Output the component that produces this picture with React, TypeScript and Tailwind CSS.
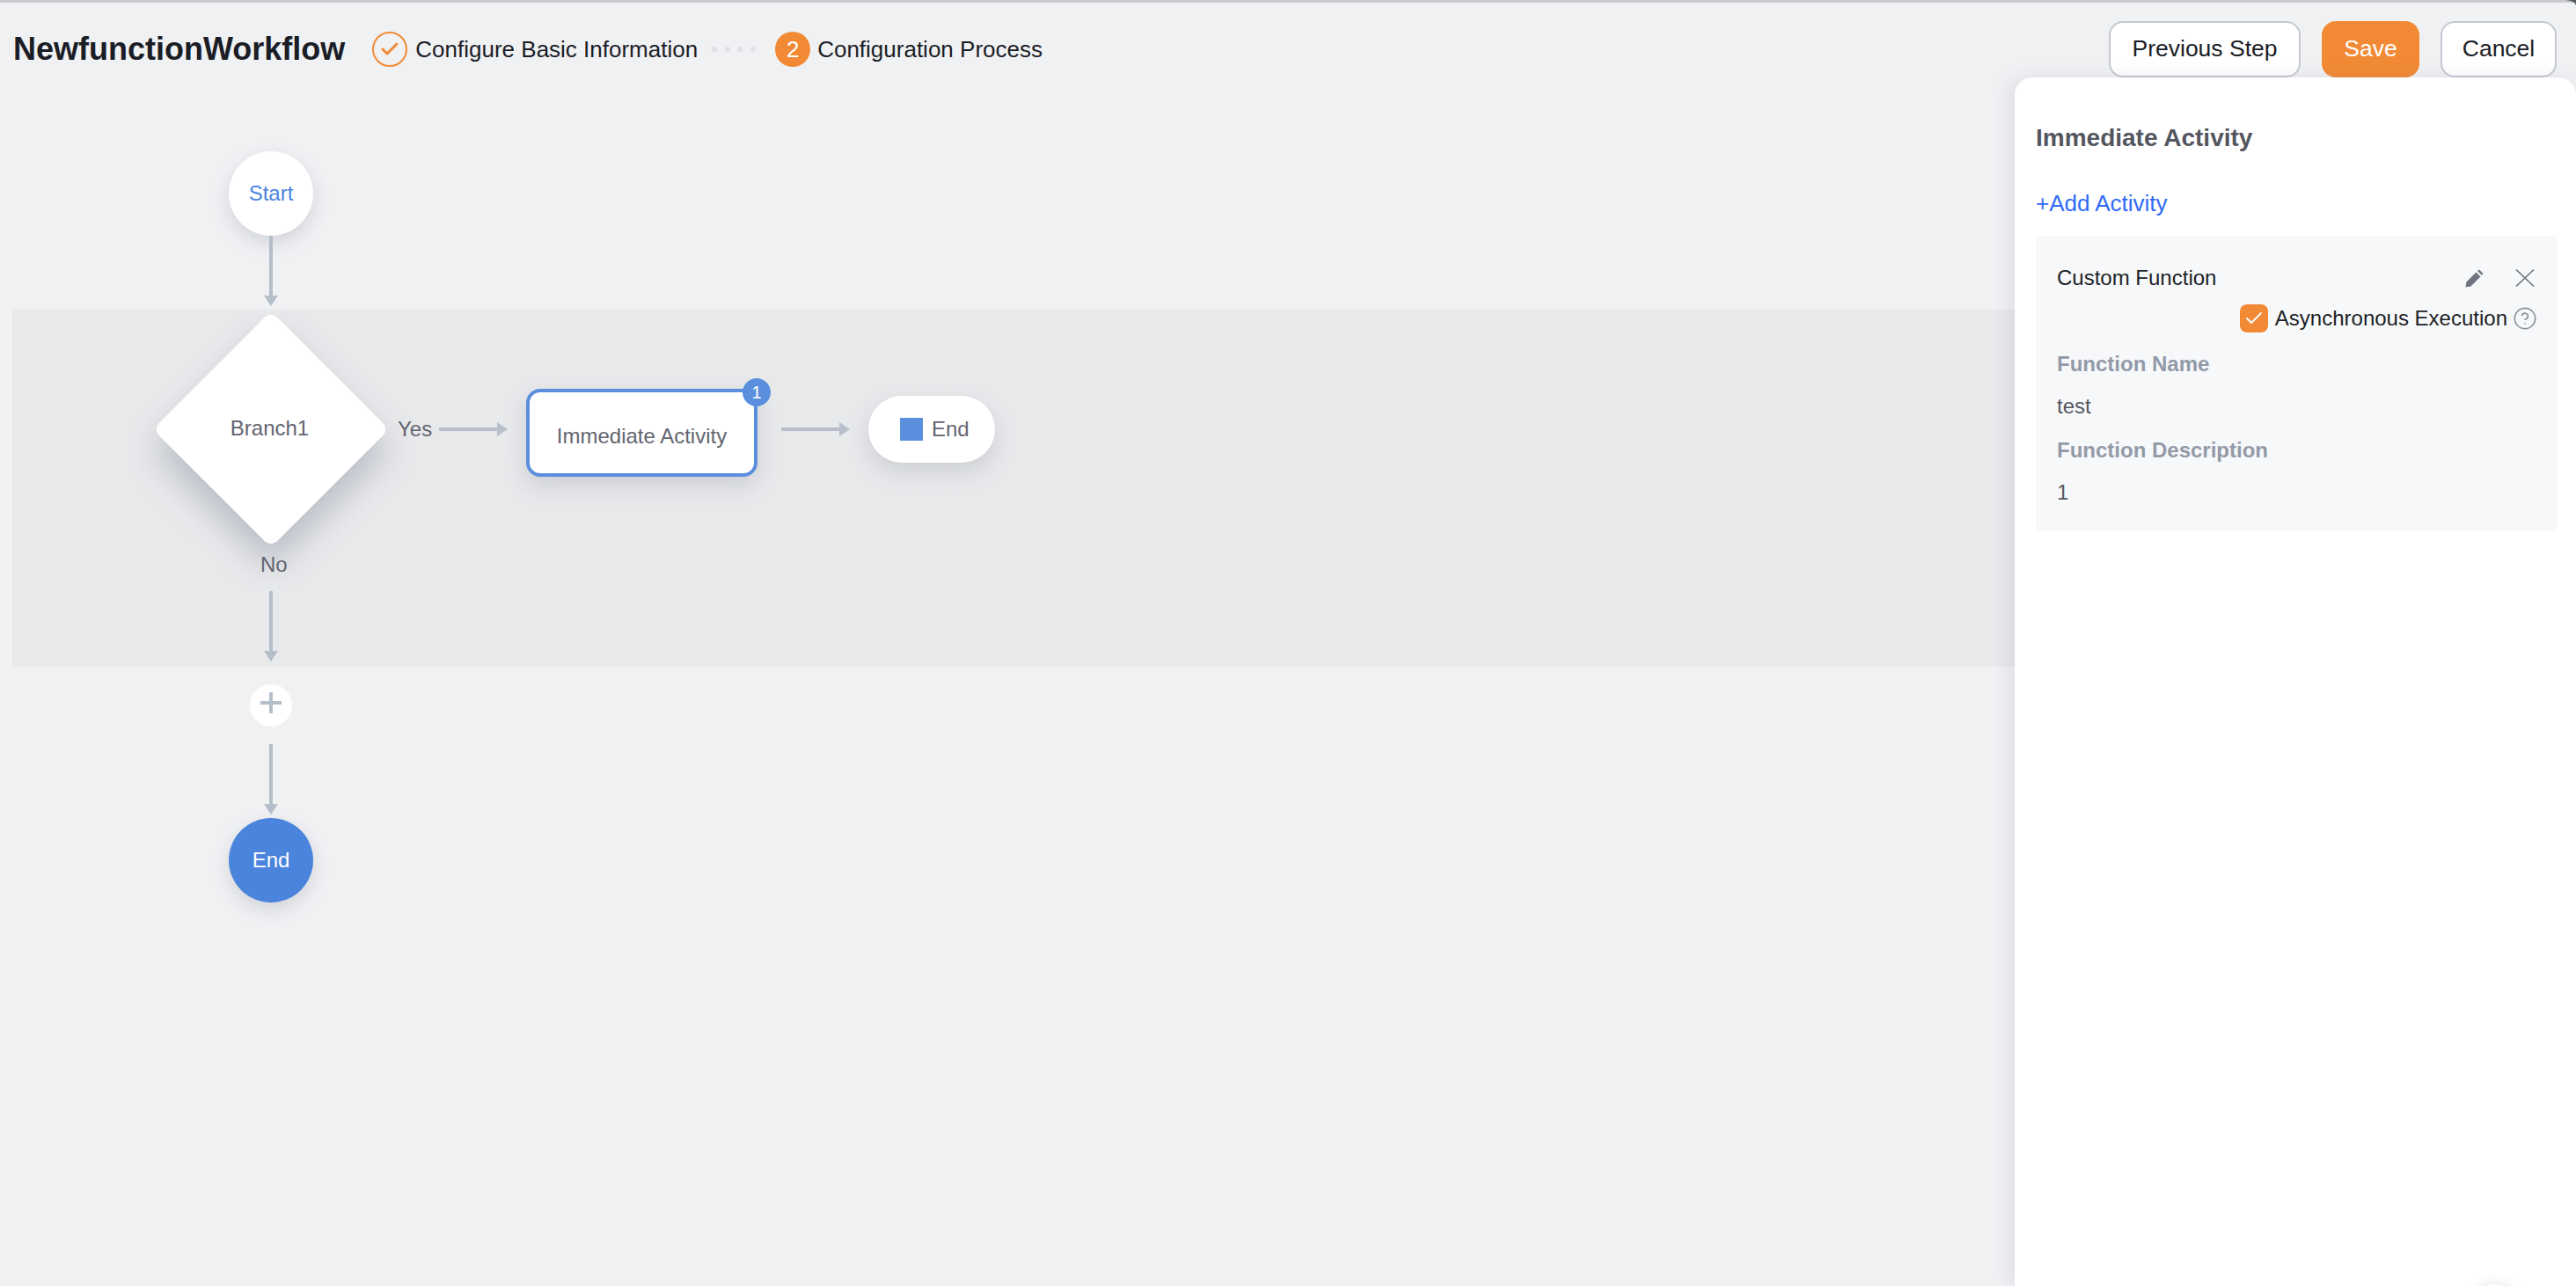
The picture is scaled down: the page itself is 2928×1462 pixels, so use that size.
import { Check, CircleHelp } from "lucide-react";

function ArrowDown({ className }: { className: string }) {
  return (
    <svg className={`absolute ${className}`} width="16" height="80" viewBox="0 0 16 80">
      <rect x="6" y="0" width="4" height="68" fill="#b4bfca" />
      <polygon points="0,68 16,68 8,80" fill="#b4bfca" />
    </svg>
  );
}

function ArrowRight({ className }: { className: string }) {
  return (
    <svg className={`absolute ${className}`} width="78" height="16" viewBox="0 0 78 16">
      <rect x="0" y="6" width="67" height="4" fill="#b7c0ca" />
      <polygon points="66,0 78,8 66,16" fill="#b7c0ca" />
    </svg>
  );
}

function FlowCanvas() {
  return (
    <div className="absolute inset-0">
      {/* band behind the branch */}
      <div className="absolute left-[14px] right-0 top-[352px] h-[406px] bg-[#e8e9eb]" />

      <div className="absolute left-[260px] top-[172px] flex h-[96px] w-[96px] items-center justify-center rounded-full bg-white text-[24px] text-[#4a84dc] shadow-[0_8px_20px_rgba(90,100,120,0.2)]">
        Start
      </div>
      <ArrowDown className="left-[300px] top-[268px]" />

      <div className="absolute left-[213px] top-[393px] h-[190px] w-[190px] rotate-45 rounded-[10px] bg-white shadow-[16px_16px_36px_rgba(90,100,120,0.32)]" />
      <div className="absolute left-[213px] top-[392px] flex h-[190px] w-[190px] items-center justify-center pr-[3px] text-[24px] text-[#63656f]">
        Branch1
      </div>
      <div className="absolute left-[452px] top-[472px] text-[24px] leading-[32px] text-[#63656f]">Yes</div>
      <ArrowRight className="left-[499px] top-[480px]" />
      <div className="absolute left-[296px] top-[626px] text-[24px] leading-[32px] text-[#63656f]">No</div>
      <ArrowDown className="left-[300px] top-[672px]" />

      <div className="absolute left-[598px] top-[442px] flex h-[100px] w-[263px] items-center justify-center rounded-[16px] border-4 border-[#5b8fdd] bg-white pt-[8px] text-[24px] text-[#63656f] shadow-[0_10px_24px_rgba(90,100,120,0.2)]">
        Immediate Activity
      </div>
      <div className="absolute left-[844px] top-[430px] flex h-[32px] w-[32px] items-center justify-center rounded-full bg-[#5b8fdd] text-[20px] text-white">
        1
      </div>
      <ArrowRight className="left-[888px] top-[480px]" />

      <div className="absolute left-[987px] top-[450px] flex h-[76px] w-[144px] items-center gap-[10px] rounded-full bg-white pl-[36px] text-[24px] text-[#63656f] shadow-[0_10px_24px_rgba(90,100,120,0.2)]">
        <span className="h-[26px] w-[26px] bg-[#5b8fdd]" />
        End
      </div>

      <div className="absolute left-[284px] top-[778px] flex h-[48px] w-[48px] items-center justify-center rounded-full bg-white">
        <svg width="24" height="24" viewBox="0 0 24 24" className="mb-[6px]">
          <rect x="0" y="10" width="24" height="4" fill="#b4bfca" />
          <rect x="10" y="0" width="4" height="24" fill="#b4bfca" />
        </svg>
      </div>
      <ArrowDown className="left-[300px] top-[846px]" />
      <div className="absolute left-[260px] top-[930px] flex h-[96px] w-[96px] items-center justify-center rounded-full bg-[#4a84dc] text-[24px] text-white shadow-[0_8px_20px_rgba(90,100,120,0.2)]">
        End
      </div>
    </div>
  );
}

function ActivityPanel() {
  return (
    <aside className="absolute bottom-0 right-0 top-[88px] w-[638px] rounded-tl-[20px] rounded-tr-[20px] bg-white pl-[24px] pr-[22px] pt-[50px] shadow-[-6px_0_20px_rgba(90,100,120,0.12)]">
      <h2 className="text-[28px] font-bold leading-[38px] text-[#54565f]">Immediate Activity</h2>
      <div className="mt-[36px] text-[26px] leading-[38px] text-[#2f6bf5]">+Add Activity</div>
      <div className="mt-[18px] h-[335px] bg-[#f7f8fa] px-[24px] pt-[32px] text-[24px]">
        <div className="flex h-[32px] items-center justify-between">
          <span className="text-[#1d1f26]">Custom Function</span>
          <div className="flex items-center gap-[36px] pr-[1px]">
            {/* pencil */}
            <svg width="21" height="21" viewBox="0 0 21 21" fill="#6f7480">
              <path d="M0.5 20.5 L1.5 14.5 L12.5 3.5 L17.5 8.5 L6.5 19.5 Z" />
              <path d="M14 2 L16 0.5 L20.5 5 L19 7 Z" />
            </svg>
            <svg width="22" height="20" viewBox="0 0 22 20" stroke="#6f7480" strokeWidth="1.6" fill="none">
              <path d="M1 0.5 L21 19.5 M21 0.5 L1 19.5" />
            </svg>
          </div>
        </div>
        <div className="mt-[14px] flex h-[32px] items-center justify-end gap-[8px]">
          <span className="flex h-[32px] w-[32px] items-center justify-center rounded-[8px] bg-[#f28a35]">
            <Check className="h-[24px] w-[24px] text-white" strokeWidth={1.8} />
          </span>
          <span className="text-[#1d1f26]">Asynchronous Execution</span>
          <CircleHelp className="-mx-[2px] h-[28px] w-[28px] text-[#8a8f9a]" strokeWidth={1.4} />
        </div>
        <div className="mt-[20px] font-bold leading-[32px] text-[#929aa8]">Function Name</div>
        <div className="mt-[16px] leading-[32px] text-[#54565f]">test</div>
        <div className="mt-[18px] font-bold leading-[32px] text-[#929aa8]">Function Description</div>
        <div className="mt-[16px] leading-[32px] text-[#54565f]">1</div>
      </div>
      {/* edge of a floating button that runs off the page */}
      <div className="absolute bottom-[-46px] right-[68px] h-[48px] w-[48px] rounded-full bg-white shadow-[0_0_14px_rgba(90,100,120,0.2)]" />
    </aside>
  );
}

export default function App() {
  return (
    <div className="relative flex h-[1462px] w-[2928px] flex-col overflow-hidden bg-[#f0f1f3] font-['Liberation_Sans',Arial,sans-serif]">
      <FlowCanvas />
      <div className="absolute inset-x-0 top-0 h-[3px] bg-[#c8cacf]" />
      <header className="relative flex items-start pl-[15px] pr-[22px] pt-[24px]">
        <div className="flex h-[64px] flex-1 items-center">
          <h1 className="text-[36px] font-bold leading-[40px] text-[#1b1d26]">NewfunctionWorkflow</h1>
          <div className="ml-[31px] flex h-[40px] w-[40px] items-center justify-center rounded-full border-2 border-[#f28a35]">
            <Check className="h-[24px] w-[24px] text-[#f28a35]" strokeWidth={3} />
          </div>
          <span className="ml-[9px] text-[26px] text-[#1b1d26]">Configure Basic Information</span>
          <div className="ml-[16px] flex w-[50px] justify-between">
            <span className="h-[6px] w-[6px] rounded-full bg-[#dfe1e6]" />
            <span className="h-[6px] w-[6px] rounded-full bg-[#dfe1e6]" />
            <span className="h-[6px] w-[6px] rounded-full bg-[#dfe1e6]" />
            <span className="h-[6px] w-[6px] rounded-full bg-[#dfe1e6]" />
          </div>
          <div className="ml-[22px] flex h-[40px] w-[40px] items-center justify-center rounded-full bg-[#f28a35] text-[26px] text-white">
            2
          </div>
          <span className="ml-[8px] text-[26px] text-[#1b1d26]">Configuration Process</span>
        </div>
        <div className="flex gap-[24px] text-[26.5px]">
          <button className="h-[64px] w-[218px] rounded-[16px] border-2 border-[#c5c8d0] bg-white text-[#1b1d26]">
            Previous Step
          </button>
          <button className="h-[64px] w-[111px] rounded-[16px] bg-[#f28a35] text-white">Save</button>
          <button className="h-[64px] w-[132px] rounded-[16px] border-2 border-[#c5c8d0] bg-white text-[#1b1d26]">
            Cancel
          </button>
        </div>
      </header>
      <ActivityPanel />
      {/* dark window corner, top right */}
      <svg className="absolute right-0 top-0" width="12" height="6" viewBox="0 0 12 6">
        <path d="M0 0 H12 V6 Q11 1 0 0 Z" fill="#55585e" />
      </svg>
    </div>
  );
}
